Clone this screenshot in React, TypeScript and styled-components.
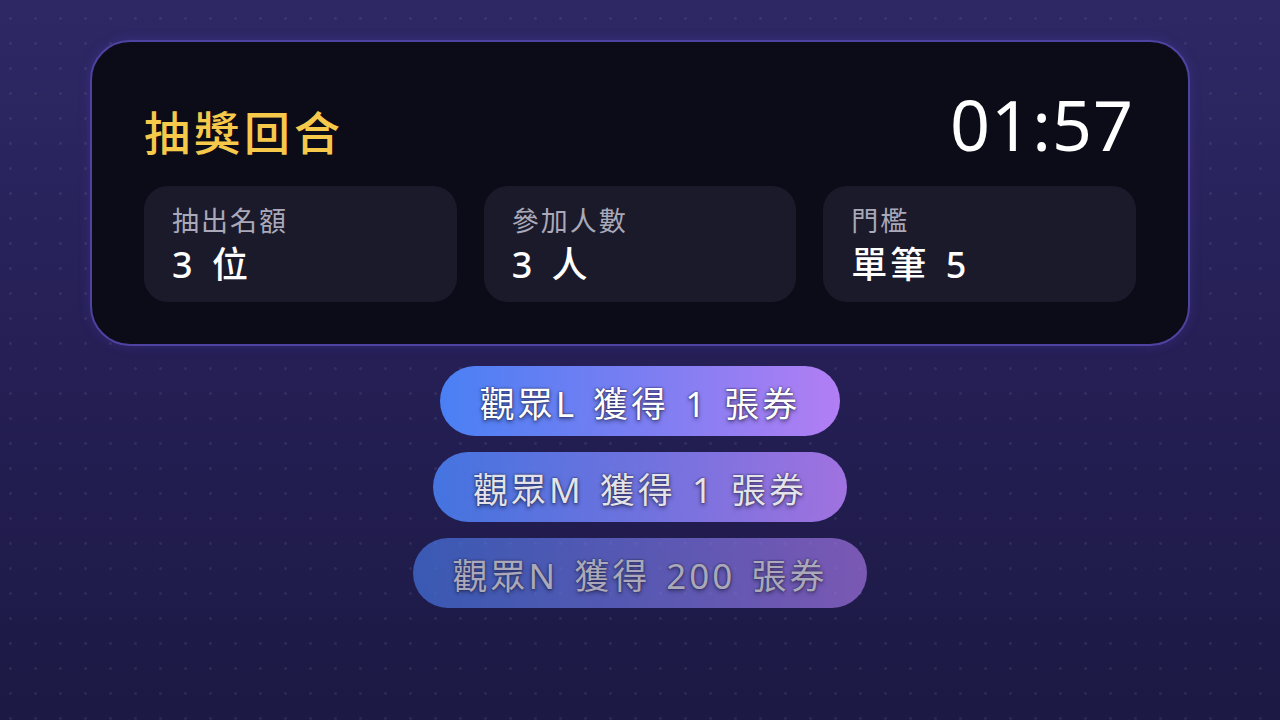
import React from 'react';
import styled, { createGlobalStyle } from 'styled-components';

const GlobalStyle = createGlobalStyle`
  html, body {
    margin: 0;
    padding: 0;
  }
  body {
    font-family: "Noto Sans", "Noto Sans CJK TC", sans-serif;
    background: #1d1944;
  }
`;

interface Stat {
    label: string;
    value: string;
}

interface Winner {
    text: string;
    fade: number;
}

const stats: Stat[] = [
    { label: '抽出名額', value: '3 位' },
    { label: '參加人數', value: '3 人' },
    { label: '門檻', value: '單筆 5' },
];

const winners: Winner[] = [
    { text: '觀眾L 獲得 1 張券', fade: 1 },
    { text: '觀眾M 獲得 1 張券', fade: 0.88 },
    { text: '觀眾N 獲得 200 張券', fade: 0.62 },
];

const App: React.FC = () => {
    return (
        <>
            <GlobalStyle />
            <Page>
                <Card>
                    <Header>
                        <Title>抽獎回合</Title>
                        <Timer>01:57</Timer>
                    </Header>
                    <StatRow>
                        {stats.map((s) => (
                            <StatBox key={s.label}>
                                <StatLabel>{s.label}</StatLabel>
                                <StatValue>{s.value}</StatValue>
                            </StatBox>
                        ))}
                    </StatRow>
                </Card>
                <WinnerList>
                    {winners.map((w) => (
                        <WinnerPill key={w.text} $fade={w.fade}>
                            {w.text}
                        </WinnerPill>
                    ))}
                </WinnerList>
            </Page>
        </>
    );
};

export default App;

// Styled components
const Page = styled.div`
  width: 1280px;
  height: 720px;
  box-sizing: border-box;
  padding-top: 40px;
  display: flex;
  flex-direction: column;
  align-items: center;
  overflow: hidden;
  background-color: #221d50;
  background-image:
    radial-gradient(circle, rgba(255, 255, 255, 0.07) 1.2px, transparent 1.6px),
    linear-gradient(180deg, #2e2865 0%, #251f55 50%, #1c1944 100%);
  background-size: 25px 25px, 100% 100%;
  background-position: -2px 6px, 0 0;
`;

const Card = styled.div`
  width: 1100px;
  box-sizing: border-box;
  padding: 52px 52px 42px;
  border: 2px solid #4e43a0;
  border-radius: 40px;
  background: #0c0c19;
  box-shadow: 0 0 12px rgba(90, 70, 200, 0.25);
`;

const Header = styled.div`
  height: 62px;
  display: flex;
  align-items: center;
  justify-content: space-between;
  margin-bottom: 30px;
`;

const Title = styled.h1`
  margin: 0;
  font-family: "Noto Sans CJK TC", sans-serif;
  font-size: 46px;
  font-weight: 500;
  letter-spacing: 4px;
  color: #f7c94b;
  line-height: 1;
  padding-top: 10px;
`;

const Timer = styled.div`
  font-family: "Noto Sans", sans-serif;
  font-size: 70px;
  font-weight: 400;
  letter-spacing: 1px;
  color: #ffffff;
  line-height: 1;
  margin-right: 2px;
  margin-top: -2px;
`;

const StatRow = styled.div`
  display: grid;
  grid-template-columns: repeat(3, 1fr);
  gap: 27px;
`;

const StatBox = styled.div`
  height: 116px;
  box-sizing: border-box;
  padding: 16px 28px 0;
  border-radius: 24px;
  background: #1a1a2b;
  display: flex;
  flex-direction: column;
`;

const StatLabel = styled.div`
  font-family: "Noto Sans CJK TC", sans-serif;
  font-size: 27px;
  letter-spacing: 2px;
  color: #a9a9b9;
  line-height: 36px;
`;

const StatValue = styled.div`
  margin-top: 4px;
  font-family: "Noto Sans", "Noto Sans CJK TC", sans-serif;
  font-size: 36px;
  font-weight: 500;
  letter-spacing: 3px;
  word-spacing: 4px;
  color: #ffffff;
  line-height: 46px;
`;

const WinnerList = styled.div`
  margin-top: 20px;
  display: flex;
  flex-direction: column;
  align-items: center;
  gap: 16px;
`;

const WinnerPill = styled.div<{ $fade: number }>`
  height: 70px;
  box-sizing: border-box;
  padding: 0 40px;
  border-radius: 35px;
  display: flex;
  align-items: center;
  justify-content: center;
  background: linear-gradient(90deg, #4a80f4 0%, #7a7ef2 50%, #b27ef4 100%);
  opacity: ${(p) => p.$fade};
  font-family: "Noto Sans", "Noto Sans CJK TC", sans-serif;
  font-size: 35px;
  font-weight: 400;
  letter-spacing: 3px;
  word-spacing: 4px;
  color: #ffffff;
  white-space: nowrap;
  text-shadow:
    0 0 2px rgba(20, 20, 50, 0.9),
    0 2px 4px rgba(0, 0, 0, 0.5);
`;
